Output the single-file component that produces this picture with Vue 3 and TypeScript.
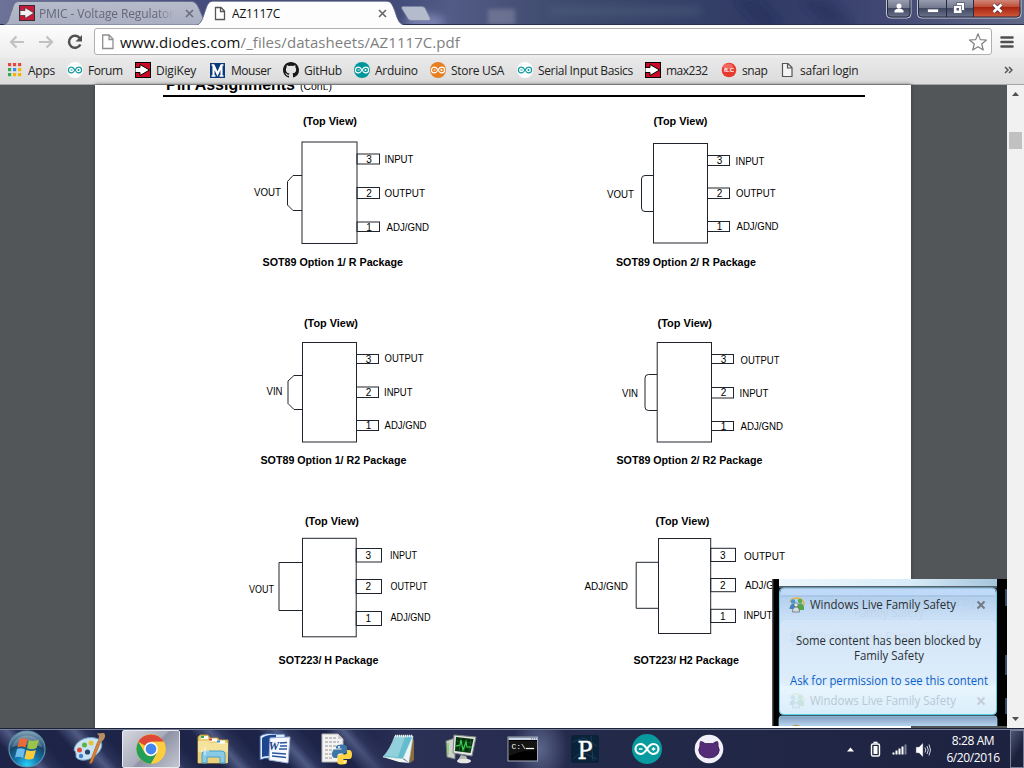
<script setup lang="ts">
interface Label { t: string; x: number; y: number; w: number }
interface Pin { y: number; h: number; ny: number; label: Label }
interface Package {
  box: string
  title: Label
  caption: Label
  body: { x: number; y: number; w: number; h: number }
  heel: string
  heelLabel: Label
  pinW: number
  pins: Pin[]
}
interface Bookmark { name: string; icon: string; w: number; ls: number }

const pin = (y: number, h: number, ny: number, t: string, x: number, ly: number, w: number): Pin => ({
  y, h, ny, label: { t, x, y: ly, w },
})

const packages: Package[] = [
  {
    box: '240 105 330 202',
    title: { t: '(Top View)', x: 303, y: 125, w: 54 },
    caption: { t: 'SOT89 Option 1/ R Package', x: 262.5, y: 266, w: 140.5 },
    body: { x: 302, y: 142, w: 55, h: 101.5 },
    heel: 'M302 175.5H293L287.5 181.5V205L293 210.5H302',
    heelLabel: { t: 'VOUT', x: 254, y: 196, w: 27 },
    pinW: 22.5,
    pins: [
      pin(154, 10, 162.5, 'INPUT', 384.5, 163, 29),
      pin(187.5, 11, 197, 'OUTPUT', 384.5, 197, 40.5),
      pin(222, 9.5, 231, 'ADJ/GND', 386.5, 231, 42.5),
    ],
  },
  {
    box: '570 105 241 202',
    title: { t: '(Top View)', x: 653.5, y: 125, w: 54 },
    caption: { t: 'SOT89 Option 2/ R Package', x: 616, y: 266, w: 140 },
    body: { x: 653.5, y: 143.5, w: 54, h: 99.5 },
    heel: 'M653.5 175.5H645Q641.5 175.5 641.5 179V208Q641.5 211.5 645 211.5H653.5',
    heelLabel: { t: 'VOUT', x: 607, y: 198, w: 27 },
    pinW: 22,
    pins: [
      pin(155.5, 10, 164, 'INPUT', 735.5, 165, 29),
      pin(188, 10.5, 197, 'OUTPUT', 736, 197, 39.5),
      pin(221.5, 10, 230, 'ADJ/GND', 736.5, 230, 42),
    ],
  },
  {
    box: '240 307 330 198',
    title: { t: '(Top View)', x: 304, y: 327, w: 54 },
    caption: { t: 'SOT89 Option 1/ R2 Package', x: 260.5, y: 464, w: 146 },
    body: { x: 302.5, y: 342.5, w: 54, h: 99.5 },
    heel: 'M302.5 375.5H294L288 381V403.5L294 409.5H302.5',
    heelLabel: { t: 'VIN', x: 266.5, y: 395, w: 16 },
    pinW: 22,
    pins: [
      pin(354.5, 9, 362.5, 'OUTPUT', 384.5, 362, 39),
      pin(387, 10.5, 396, 'INPUT', 384, 396, 28.5),
      pin(420.5, 10, 429, 'ADJ/GND', 384.5, 429, 42),
    ],
  },
  {
    box: '570 307 241 198',
    title: { t: '(Top View)', x: 657.5, y: 327, w: 54.5 },
    caption: { t: 'SOT89 Option 2/ R2 Package', x: 616.5, y: 464, w: 146 },
    body: { x: 657.2, y: 342.5, w: 54.3, h: 99.5 },
    heel: 'M657 374.5H648.5Q645 374.5 645 378V407Q645 410.5 648.5 410.5H657',
    heelLabel: { t: 'VIN', x: 622, y: 397, w: 16 },
    pinW: 22,
    pins: [
      pin(354.5, 9, 363, 'OUTPUT', 740.5, 364, 39),
      pin(387.5, 10.5, 396, 'INPUT', 739.5, 397, 29),
      pin(421.5, 9, 429.5, 'ADJ/GND', 740.5, 430, 42.5),
    ],
  },
  {
    box: '240 505 330 200',
    title: { t: '(Top View)', x: 305, y: 525, w: 54 },
    caption: { t: 'SOT223/ H Package', x: 278.5, y: 664, w: 100 },
    body: { x: 302.5, y: 538.3, w: 53.7, h: 98.5 },
    heel: 'M302.5 562.5H279V610.5H302.5',
    heelLabel: { t: 'VOUT', x: 249, y: 593, w: 25 },
    pinW: 25.3,
    pins: [
      pin(548.5, 13.5, 559, 'INPUT', 390, 559, 27),
      pin(579.5, 14, 590, 'OUTPUT', 390.5, 590, 37),
      pin(611.5, 14, 622, 'ADJ/GND', 390.5, 621, 40),
    ],
  },
  {
    box: '570 505 241 200',
    title: { t: '(Top View)', x: 655.5, y: 525, w: 54 },
    caption: { t: 'SOT223/ H2 Package', x: 633.5, y: 664, w: 105.5 },
    body: { x: 658.5, y: 538.5, w: 52.2, h: 95 },
    heel: 'M658.5 562.3H636.2V608.3H658.5',
    heelLabel: { t: 'ADJ/GND', x: 584.5, y: 590, w: 43.5 },
    pinW: 24.8,
    pins: [
      pin(548.3, 13.2, 559, 'OUTPUT', 744, 560, 41),
      pin(578.5, 13.2, 589, 'ADJ/GND', 745, 589, 43),
      pin(609.3, 13.2, 620, 'INPUT', 743.5, 619, 29),
    ],
  },
]

const bookmarks: Bookmark[] = [
  { name: 'Apps', icon: 'apps', w: 60, ls: -0.25 },
  { name: 'Forum', icon: 'ardWhite', w: 68, ls: -0.4 },
  { name: 'DigiKey', icon: 'digikey', w: 75, ls: -0.2 },
  { name: 'Mouser', icon: 'mouser', w: 73, ls: -0.45 },
  { name: 'GitHub', icon: 'github', w: 71, ls: -0.3 },
  { name: 'Arduino', icon: 'ardTeal', w: 76, ls: -0.3 },
  { name: 'Store USA', icon: 'ardOrange', w: 87, ls: -0.3 },
  { name: 'Serial Input Basics', icon: 'ardWhite', w: 128, ls: -0.35 },
  { name: 'max232', icon: 'digikey', w: 76, ls: -0.5 },
  { name: 'snap', icon: 'flc', w: 58, ls: -0.4 },
  { name: 'safari login', icon: 'page', w: 90, ls: -0.25 },
]
const ardFill: Record<string, string> = { ardWhite: '#fff', ardTeal: '#00979c', ardOrange: '#e67e22' }
const ardLine = (i: string): string => (i === 'ardWhite' ? '#11999e' : '#fff')
const appColors = ['#e8453c', '#e8453c', '#e8453c', '#34a853', '#4285f4', '#f4b400', '#34a853', '#f4b400', '#f4b400']
const tasks = ['paint', 'chrome', 'explorer', 'word', 'python', 'notepad', 'monitor', 'cmd', 'processing', 'arduino', 'github']
</script>

<template>
  <div class="screen">
    <header class="titlebar">
      <svg class="frame" width="1024" height="25" viewBox="0 0 1024 25">
        <defs>
          <linearGradient id="glass" x1="0" x2="1" y1="0" y2="0">
            <stop offset="0" stop-color="#6d7298" /><stop offset=".2" stop-color="#454c7c" />
            <stop offset=".38" stop-color="#424a78" /><stop offset=".44" stop-color="#525b85" />
            <stop offset=".55" stop-color="#3f4a6e" /><stop offset=".75" stop-color="#303a64" />
            <stop offset=".86" stop-color="#3f4772" /><stop offset="1" stop-color="#606888" />
          </linearGradient>
          <linearGradient id="tabOff" x1="0" x2="0" y1="0" y2="1">
            <stop offset="0" stop-color="#b7bccb" /><stop offset="1" stop-color="#a9afc1" />
          </linearGradient>
          <filter id="soft" x="-50%" y="-100%" width="200%" height="300%"><feGaussianBlur stdDeviation="4" /></filter>
          <filter id="softer" x="-50%" y="-50%" width="200%" height="200%"><feGaussianBlur stdDeviation="2" /></filter>
        </defs>
        <rect width="1024" height="25" fill="url(#glass)" />
        <rect x="488" y="9" width="27" height="16" fill="#8c90a8" opacity=".5" filter="url(#softer)" />
        <g filter="url(#soft)">
          <ellipse cx="425" cy="22" rx="20" ry="8" fill="#8c95c4" opacity=".7" />
          <rect x="550" y="8" width="150" height="6" fill="#566b86" opacity=".5" />
          <path d="M735 0h22l24 25h-22zM800 0h30l24 25h-30z" fill="#1e2955" opacity=".5" />
        </g>
        <path d="M0 24.5H1024" stroke="#2b3050" />
        <path d="M4 25C9 23 9 17 12 10C14 3 15 1.5 20 1.5H190C196 1.5 197 4 200 11L206 25Z" fill="url(#tabOff)" stroke="#6b7190" />
        <path d="M196 25.5C202 24 203 17 205.500 10C208 3 209 1.200 214 1.200H386C391 1.200 392 4 394.500 10C397 17 398 24 405 25.500Z" fill="#fdfdfd" stroke="#59607f" stroke-width=".8" />
        <path d="M404 6.500H421C424 6.500 425 7.500 426 10L430 18C430.500 20 430 20.500 428 20.500H412C409 20.500 408 19 407 17L402 9C401 7 402 6.500 404 6.500Z" fill="#b4bbcd" stroke="#7d84a4" stroke-width=".8" />
      </svg>
      <div class="tab off">
        <svg width="16" height="16" viewBox="0 0 16 16"><rect x=".5" y=".5" width="15" height="15" fill="#c61c38" stroke="#3c2a35" /><path d="M1 5.500H6V2.500L15 8L6 13.500V10.500H1Z" fill="#f4f0f2" stroke="#3c2a35" stroke-width=".7" /></svg>
        <span class="tabname">PMIC - Voltage Regulators</span>
        <svg class="x" width="9" height="9" viewBox="0 0 9 9"><path d="M1 1L8 8M8 1L1 8" stroke="#696d7b" stroke-width="1.600" /></svg>
      </div>
      <div class="tab on">
        <svg width="12" height="15" viewBox="0 0 12 15"><path d="M1.500 1.500H7L10.500 5V13.500H1.500ZM6.500 1.500V5.500H10.500" fill="#fff" stroke="#555" stroke-width="1.300" /></svg>
        <span class="tabname">AZ1117C</span>
        <svg class="x" width="9" height="9" viewBox="0 0 9 9"><path d="M1 1L8 8M8 1L1 8" stroke="#666" stroke-width="1.600" /></svg>
      </div>
      <svg class="controls" width="138" height="20" viewBox="886 0 138 20">
        <defs>
          <linearGradient id="btn" x1="0" x2="0" y1="0" y2="1">
            <stop offset="0" stop-color="#9ca1b2" /><stop offset=".45" stop-color="#747a90" />
            <stop offset=".48" stop-color="#3f4660" /><stop offset="1" stop-color="#6f7690" />
          </linearGradient>
          <linearGradient id="close" x1="0" x2="0" y1="0" y2="1">
            <stop offset="0" stop-color="#d28f82" /><stop offset=".42" stop-color="#c0503a" />
            <stop offset=".46" stop-color="#a82410" /><stop offset="1" stop-color="#d05a3a" />
          </linearGradient>
        </defs>
        <path d="M886.500 -1V14Q886.500 18 890.500 18H907Q911 18 911 14V-1Z" fill="url(#btn)" stroke="#c2c6d3" />
        <path d="M887.500 -1V13.500Q887.500 17 891 17H906.500Q910 17 910 13.500V-1" fill="none" stroke="#24293f" />
        <circle cx="899" cy="6" r="2.500" fill="#fff" /><path d="M894.500 12.500V10.500Q896 8.500 899 8.500T903.500 10.500V12.500Z" fill="#fff" />
        <path d="M917.500 -1V14Q917.500 18 921.500 18H1017Q1021 18 1021 14V-1Z" fill="url(#btn)" stroke="#c2c6d3" />
        <path d="M973.500 -1V17H1016Q1020 17 1020 13.500V-1Z" fill="url(#close)" />
        <path d="M918.500 -1V13.500Q918.500 17 922 17H1016.500Q1020 17 1020 13.500V-1M946.500 0V17M973.500 0V17" fill="none" stroke="#282c42" />
        <rect x="927.500" y="9" width="11" height="3.500" fill="#fff" stroke="#50566c" stroke-width=".8" />
        <path d="M956.500 2.500H964.500V10.500H962V13.500H953.500V5.500H956.500Z" fill="#fff" stroke="#4b5066" stroke-width=".8" /><rect x="956.500" y="8" width="2.500" height="2.500" fill="#555b72" /><path d="M957 5.500H961.500V10.500" fill="none" stroke="#555b72" stroke-width=".8" />
        <path d="M993.500 4.500L1001.500 12M1001.500 4.500L993.500 12" stroke="#53303a" stroke-width="4.200" /><path d="M993.500 4.500L1001.500 12M1001.500 4.500L993.500 12" stroke="#fff" stroke-width="2.700" />
      </svg>
    </header>

    <div class="toolbar">
      <svg width="16" height="14" viewBox="0 0 16 14"><path d="M15 7H2M7.500 1.500L2 7L7.500 12.500" fill="none" stroke="#c1c1c1" stroke-width="2.200" /></svg>
      <svg width="16" height="14" viewBox="0 0 16 14"><path d="M1 7H14M8.500 1.500L14 7L8.500 12.500" fill="none" stroke="#c1c1c1" stroke-width="2.200" /></svg>
      <svg width="16" height="16" viewBox="0 0 16 16"><path d="M12.800 4.200A6 6 0 1 0 13.400 10.500" fill="none" stroke="#505050" stroke-width="2.500" /><path d="M15 1V7.500H8.500Z" fill="#505050" /></svg>
      <div class="omnibox">
        <svg width="12" height="16" viewBox="0 0 12 16"><path d="M.7 1H7L11 5V14.500H.7ZM7 1V5.500H11" fill="#fff" stroke="#8f8f8f" stroke-width="1.300" /></svg>
        <span class="url"><b>www.diodes.com</b><i>/_files/datasheets/AZ1117C.pdf</i></span>
        <svg width="20" height="20" viewBox="0 0 20 20"><path d="M10 1.800L12.300 7.600L18.500 8L13.700 12L15.300 18L10 14.700L4.700 18L6.300 12L1.500 8L7.700 7.600Z" fill="#fff" stroke="#808080" stroke-width="1.200" stroke-linejoin="round" /></svg>
      </div>
      <svg class="menu" width="14" height="14" viewBox="0 0 14 14"><path d="M1.500 2.500H12.500M1.500 7H12.500M1.500 11.500H12.500" stroke="#505050" stroke-width="2.600" stroke-linecap="round" /></svg>
    </div>

    <nav class="bookmarks">
      <div v-for="(b, i) in bookmarks" :key="i" class="mark" :style="{ width: b.w + 'px', letterSpacing: b.ls + 'px' }">
        <svg width="16" height="16" viewBox="0 0 16 16">
          <g v-if="b.icon === 'apps'"><rect v-for="(c, k) in appColors" :key="k" :x="1 + (k % 3) * 5" :y="1 + Math.floor(k / 3) * 5" width="3.200" height="3.200" :fill="c" /></g>
          <g v-else-if="ardFill[b.icon]">
            <circle cx="8" cy="8" r="8" :fill="ardFill[b.icon]" />
            <path d="M8 8C6.500 5.500 5.500 5 4.200 5.200A2.800 2.800 0 0 0 4.200 10.800C5.500 11 6.500 10.500 8 8C9.500 5.500 10.500 5 11.800 5.200A2.800 2.800 0 0 1 11.800 10.800C10.500 11 9.500 10.500 8 8ZM3.500 8H5.500M10.500 8H12.500M11.500 7V9" fill="none" :stroke="ardLine(b.icon)" stroke-width="1.200" />
          </g>
          <g v-else-if="b.icon === 'digikey'"><rect x=".5" y=".5" width="15" height="15" fill="#cc0a27" stroke="#000" /><path d="M0 5.500H5V2.500L14.500 8L5 13.500V10.500H0Z" fill="#fff" stroke="#000" /></g>
          <g v-else-if="b.icon === 'mouser'"><rect x="0" y="1" width="15" height="15" fill="#0a3a7a" /><path d="M3.500 14V3L7.500 12L11.500 3V14" fill="none" stroke="#fff" stroke-width="2.100" /><path d="M1.500 14H5.500M9.500 14H13.500M1.500 3H4M11 3H13.500" stroke="#fff" stroke-width="1.300" /></g>
          <path v-else-if="b.icon === 'github'" fill="#181616" d="M8 0C3.580 0 0 3.580 0 8c0 3.540 2.290 6.530 5.470 7.590.4.070.55-.17.55-.38v-1.490c-2.230.48-2.690-1.070-2.690-1.070-.36-.92-.89-1.170-.89-1.170-.73-.5.050-.49.050-.49.810.060 1.230.83 1.230.83.710 1.230 1.870.87 2.330.66.070-.52.280-.87.510-1.070-1.780-.2-3.640-.89-3.640-3.950 0-.87.310-1.590.820-2.150-.08-.2-.36-1.020.080-2.120 0 0 .67-.21 2.200.820a7.600 7.600 0 0 1 4 0c1.530-1.040 2.200-.82 2.200-.82.440 1.100.160 1.920.080 2.120.51.560.820 1.270.820 2.150 0 3.070-1.870 3.750-3.650 3.950.29.250.540.730.540 1.480v2.200c0 .21.150.46.550.380A8 8 0 0 0 16 8c0-4.420-3.580-8-8-8z" />
          <g v-else-if="b.icon === 'flc'"><circle cx="8" cy="8" r="7.300" fill="#e8392f" /><ellipse cx="7" cy="4.500" rx="5" ry="3" fill="#f58b80" opacity=".6" /><text x="8" y="10.300" class="flc">fLC</text></g>
          <path v-else d="M3.500 1.500H9L13 5.500V14.500H3.500ZM8.500 1.500V6H13" fill="#f4f4f4" stroke="#555" stroke-width="1.200" />
        </svg>
        <span>{{ b.name }}</span>
      </div>
      <svg class="more" width="9" height="8" viewBox="0 0 9 8"><path d="M1 1L4 4L1 7M5 1L8 4L5 7" fill="none" stroke="#555" stroke-width="1.500" /></svg>
    </nav>

    <main class="viewer">
      <article class="sheet">
        <svg class="heading" width="816" height="20" viewBox="95 85 816 20">
          <text x="166" y="89.800" class="h" textLength="129" lengthAdjust="spacingAndGlyphs">Pin Assignments</text>
          <text x="300" y="89.800" class="cont" textLength="32" lengthAdjust="spacingAndGlyphs">(Cont.)</text>
          <path d="M163 96H865" stroke="#000" stroke-width="2" />
        </svg>
        <section class="packages">
          <svg v-for="p in packages" :key="p.box" :viewBox="p.box" :width="p.box.split(' ')[2]" :height="p.box.split(' ')[3]">
            <g class="line">
              <path :d="p.heel" />
              <rect :x="p.body.x" :y="p.body.y" :width="p.body.w" :height="p.body.h" />
              <rect v-for="n in p.pins" :key="n.y" :x="p.body.x + p.body.w" :y="n.y" :width="p.pinW" :height="n.h" />
            </g>
            <text class="bold" :x="p.title.x" :y="p.title.y" :textLength="p.title.w" lengthAdjust="spacingAndGlyphs">{{ p.title.t }}</text>
            <text class="bold" :x="p.caption.x" :y="p.caption.y" :textLength="p.caption.w" lengthAdjust="spacingAndGlyphs">{{ p.caption.t }}</text>
            <text :x="p.heelLabel.x" :y="p.heelLabel.y" :textLength="p.heelLabel.w" lengthAdjust="spacingAndGlyphs">{{ p.heelLabel.t }}</text>
            <template v-for="(n, k) in p.pins" :key="k">
              <text class="num" :x="p.body.x + p.body.w + 12" :y="n.ny">{{ 3 - k }}</text>
              <text :x="n.label.x" :y="n.label.y" :textLength="n.label.w" lengthAdjust="spacingAndGlyphs">{{ n.label.t }}</text>
            </template>
          </svg>
        </section>
      </article>
      <aside class="scroll">
        <svg width="17" height="16" viewBox="0 0 17 16"><path d="M5 11L8.500 7L12 11Z" fill="#505050" /></svg>
        <div class="thumb"></div>
        <svg width="17" height="16" viewBox="0 0 17 16"><path d="M5 5L8.500 9L12 5Z" fill="#505050" /></svg>
      </aside>
    </main>

    <div class="popup">
      <svg class="popback" width="235" height="147" viewBox="772 579 235 147">
        <defs>
          <linearGradient id="pg" x1="0" x2="0" y1="0" y2="1">
            <stop offset="0" stop-color="#a9caec" /><stop offset=".12" stop-color="#bad4f0" /><stop offset=".24" stop-color="#cbe0f6" /><stop offset=".26" stop-color="#c6ddf5" />
            <stop offset=".7" stop-color="#dcedfb" /><stop offset=".78" stop-color="#e8f5fd" /><stop offset="1" stop-color="#d9eefb" />
          </linearGradient>
          <linearGradient id="pt" x1="0" x2="1" y1="0" y2="0"><stop offset="0" stop-color="#edf7fd" /><stop offset=".6" stop-color="#d8ecf8" /><stop offset="1" stop-color="#a5c5dc" /></linearGradient>
          <linearGradient id="pn" x1="0" x2="0" y1="0" y2="1"><stop offset="0" stop-color="#7f9cbd" /><stop offset="1" stop-color="#b9d2ef" /></linearGradient>
          <linearGradient id="edge" x1="0" x2="1" y1="0" y2="0"><stop offset="0" stop-color="#777" /><stop offset=".25" stop-color="#000" /></linearGradient>
        </defs>
        <rect x="772" y="579" width="8" height="147" fill="url(#edge)" />
        <rect x="779" y="579" width="228" height="147" fill="#111a20" />
        <rect x="997" y="579" width="10" height="147" fill="#000" />
        <rect x="779" y="579" width="218" height="8" fill="url(#pt)" />
        <path d="M779 587H997" stroke="#555f68" stroke-width="2" />
        <rect x="779.500" y="588" width="217" height="126.500" rx="4" fill="url(#pg)" stroke="#59cfe5" />
        <path d="M780 592Q780 588 784 588H992Q996 588 996 592" fill="none" stroke="#7d93ac" />
        <path d="M781 595.500H995V591Q995 588.500 992 588.500H784Q781 588.500 781 591Z" fill="#bfdaf8" />
        <path d="M781 596H995" stroke="#9fbbdc" />
        <rect x="780" y="620" width="216" height="66" rx="5" fill="#dcebfa" opacity=".55" />
        <path d="M779 726V719Q779 716 782 716H994Q997 716 997 719V726Z" fill="url(#pn)" stroke="#8fe0ee" stroke-width=".7" />
        <path d="M792 726Q796 723.500 800 726" fill="#b09a50" />
        <path d="M1006 589V606M1006 655V675M1006 698V714" stroke="#324865" stroke-width="2" />
        <g id="people" transform="translate(789 597)">
          <path d="M1 5Q3 1 8 1Q14 1 15.500 8" fill="none" stroke="#e9b340" stroke-width="1.500" />
          <circle cx="4" cy="4.500" r="2.300" fill="#4a96d0" /><circle cx="11" cy="4" r="2.300" fill="#58ad57" />
          <path d="M.5 12Q1 7 4 7T8 12ZM8 12Q8 6.500 11.500 6.500T15 12Z" fill="#3e83bb" /><path d="M8 13Q8 6.500 11.500 6.500T15 13Z" fill="#55a745" />
          <circle cx="7" cy="8" r="2.100" fill="#e9edf0" stroke="#566" stroke-width=".7" /><path d="M3.500 15Q3.500 10 7 10T10.500 15Z" fill="#d8dde1" stroke="#566" stroke-width=".7" />
        </g>
        <use href="#people" y="33" opacity=".06" /><use href="#people" y="96" opacity=".16" />
        <path d="M977.500 601.500L984.500 608.500M984.500 601.500L977.500 608.500" stroke="#737a84" stroke-width="2" />
        <path d="M977.500 697.500L984.500 704.500M984.500 697.500L977.500 704.500" stroke="#c3cdd6" stroke-width="1.800" />
        <g class="seg">
          <text x="820" y="606" textLength="156" class="ghost faint">content has been blocked by</text>
          <text x="854" y="617" textLength="70" class="ghost faint">Family Safety</text>
          <text x="810" y="641" textLength="146" lengthAdjust="spacingAndGlyphs" class="ghost fainter">Windows Live Family Safety</text>
          <text x="810" y="609" textLength="146" lengthAdjust="spacingAndGlyphs">Windows Live Family Safety</text>
          <text x="796" y="645" textLength="185" lengthAdjust="spacingAndGlyphs">Some content has been blocked by</text>
          <text x="854" y="660" textLength="70" lengthAdjust="spacingAndGlyphs">Family Safety</text>
          <text x="790" y="685" textLength="198" lengthAdjust="spacingAndGlyphs" class="link">Ask for permission to see this content</text>
          <text x="810" y="705" textLength="146" lengthAdjust="spacingAndGlyphs" class="ghost">Windows Live Family Safety</text>
        </g>
      </svg>
    </div>

    <footer class="taskbar">
      <div class="start">
        <svg width="38" height="38" viewBox="0 0 38 38">
          <defs><radialGradient id="orb" cx=".5" cy=".95" r=".95"><stop offset="0" stop-color="#25d3fb" /><stop offset=".35" stop-color="#1577ae" /><stop offset=".65" stop-color="#174569" /><stop offset="1" stop-color="#8ba9bd" /></radialGradient></defs>
          <circle cx="19" cy="19" r="18" fill="url(#orb)" stroke="#5c92ad" stroke-width="1.200" />
          <path d="M4 17A15.500 15.500 0 0 1 34 17Q19 13 4 17Z" fill="#fff" opacity=".22" />
          <path d="M11.500 9.500Q15 7 19.500 9.500L17.500 17.500Q13.500 15.500 9.500 17.500Z" fill="#ec6a34" /><path d="M21 10Q26 12 31 9.500L28.500 18Q23.500 20.500 19 18Z" fill="#9bc44b" />
          <path d="M9 19Q13 17.500 17 19.500L15 28Q11 26 7 27.500Z" fill="#6cbcec" /><path d="M18.500 20Q23.500 22 28 20L25.500 28.500Q20.500 30.500 16.500 28.500Z" fill="#fdca3c" />
        </svg>
      </div>
      <div v-for="t in tasks" :key="t" class="task" :class="{ active: t === 'chrome' }">
        <svg width="32" height="32" viewBox="0 0 32 32">
          <g v-if="t === 'paint'">
            <path d="M1 17C2 8 13 3 22 5C31 7 30 15 25 20C20 26 11 29 5 26C1 24 5 21 1 17Z" fill="#c9e3f3" stroke="#6fa0c2" />
            <circle cx="6.500" cy="17" r="2.500" fill="#dd4b39" /><circle cx="11.500" cy="12" r="2.500" fill="#61b146" /><circle cx="18" cy="10" r="2.500" fill="#e8c331" /><circle cx="14.500" cy="19" r="2.600" fill="#29456b" /><circle cx="8" cy="23" r="2.200" fill="#3e7fc8" />
            <path d="M16.500 30L25 8L27.500 9L19.500 29Q17.500 31.500 16.500 30Z" fill="#e18330" stroke="#9c5417" stroke-width=".6" /><path d="M25 8L26 3L24 .5L31 0Q34 4 28.500 9Z" fill="#b98d60" />
          </g>
          <g v-else-if="t === 'chrome'">
            <circle cx="16" cy="16" r="14.700" fill="#fcc934" />
            <path d="M16 16L3.300 8.700A14.700 14.700 0 0 1 28.700 8.700H16Z" fill="#df4937" />
            <path d="M3.300 8.700L9.700 19.700A7.300 7.300 0 0 0 16 23.300L22.300 19.700L16 30.700A14.700 14.700 0 0 1 3.300 8.700Z" fill="#229f58" />
            <path d="M28.700 8.700H16V16L22.300 19.700L16 30.700A14.700 14.700 0 0 0 28.700 8.700Z" fill="#fccd3f" />
            <circle cx="16" cy="16" r="6.900" fill="#fff" /><circle cx="16" cy="16" r="5.400" fill="#4386ed" />
          </g>
          <g v-else-if="t === 'explorer'">
            <path d="M1 4L3 2H11L13 5H21L22 7H31L30 30H1Z" fill="#e7cf75" stroke="#b99736" />
            <rect x="4" y="3" width="7" height="3" fill="#fff" /><rect x="4" y="3" width="3" height="2" fill="#2eaa48" /><rect x="12" y="5.500" width="8" height="3" fill="#fff" /><rect x="12" y="5.500" width="3" height="2" fill="#d33f2d" /><rect x="20" y="8" width="8" height="3" fill="#fff" /><rect x="20" y="8" width="3" height="2" fill="#308cd2" />
            <path d="M1 8H11L13 10H31V30H1Z" fill="#f5e39b" /><path d="M1 19H31V30H1Z" fill="#ecd17c" />
            <path d="M20 7.500H28V10.500H20Z" fill="#fff" /><path d="M20 7.500H23V9.500H20Z" fill="#308cd2" />
            <path d="M5 30V21Q5 18 8 18H25Q28 18 28 21V30H23V24H10V30Z" fill="#89cbe6" stroke="#4aa1c8" /><path d="M8 14V22M4 18H12" stroke="#fff" opacity=".8" />
          </g>
          <g v-else-if="t === 'word'">
            <path d="M1 27V3Q7-1 18 1H26V24L12 25Q5 25 1 27Z" fill="#dfe9f8" stroke="#2e58a0" /><path d="M3 24V5Q9 1 17 2V24Q9 22 3 24Z" fill="#1e4690" />
            <path d="M11 5L31 4L29 30L10 27Z" fill="#f7faff" stroke="#9fb4d8" /><path d="M21 10L28 9.500M21 13L28 13M20 16L28 16M13 20L27 21M13 23L27 24.500" stroke="#2b569e" stroke-width="1.600" />
            <text x="9.500" y="17" class="w">W</text>
          </g>
          <g v-else-if="t === 'python'">
            <path d="M1 1H17L22 6V29H1Z" fill="#f3f3f3" stroke="#b4b4b4" /><path d="M17 1V6H22Z" fill="#ccc" /><path d="M4 5H15M4 9H18M4 13H18M4 17H14M4 21H12M4 25H12" stroke="#b4b4b4" stroke-width="1.400" stroke-dasharray="3 1" />
            <path d="M15 21.500V14Q15 11.500 20.500 11.500T26 14V18Q26 20.500 23.500 20.500H19Q16.500 20.500 16.500 23V25H14Q11 25 11 21T14 16.500H20.500V15.500H15" fill="#3c76a8" /><path d="M26 17H28Q31 17 31 21.500T28 26H21V27H26V29Q26 31.500 21 31.500T16.500 29V24Q16.500 21.500 19 21.500H23.500Q26 21.500 26 19Z" fill="#ffd544" />
            <circle cx="18" cy="14" r="1" fill="#fff" /><circle cx="23.500" cy="29" r="1" fill="#fff" />
          </g>
          <g v-else-if="t === 'notepad'">
            <path d="M27 5L31 7V27L27 30Z" fill="#8e6b3b" /><path d="M12 3L30 4L26 30L19 24Z" fill="#eef6f5" stroke="#9fb5b8" stroke-width=".6" />
            <path d="M12 3H30L20 26L0 24Q7 17 12 3Z" fill="#65bccd" stroke="#d8f4f5" stroke-width=".7" /><path d="M12 4H22L15 24L2 23Q8 16 12 4Z" fill="#a9dce2" opacity=".65" /><path d="M0 24L20 26L26 30L16 29Z" fill="#f1f6f4" />
            <path d="M12 3H29" stroke="#eee" stroke-width="2.500" stroke-dasharray="1.200 .8" />
          </g>
          <g v-else-if="t === 'monitor'">
            <path d="M1 8L10 5V26L2 24Z" fill="#cdd2cb" stroke="#727974" /><path d="M3 10V22" stroke="#70cc60" stroke-width="1.200" />
            <path d="M9 2L31 4L27 23L8 20Z" fill="#e5e7e2" stroke="#7f8580" /><path d="M11 4L28.500 6L25.500 20L10 18Z" fill="#063210" /><path d="M12 8L27 10M11 13L26 15M16 5L14 18M21 6L19 19M26 6L24 19" stroke="#246e2f" stroke-width=".6" /><path d="M11 13L15 12L16 7L18 17L21 9L22 14L27 14" fill="none" stroke="#35d14a" stroke-width="1.200" />
            <path d="M16 22L21 23L23 27H13Z" fill="#b3b9b4" /><ellipse cx="19" cy="28" rx="7" ry="2.300" fill="#e5e7e3" />
          </g>
          <g v-else-if="t === 'cmd'"><rect x="1" y="4" width="29.500" height="24" fill="#000" stroke="#a2aab6" /><rect x="1.500" y="4.500" width="28.500" height="2.500" fill="#cad7e9" /><path d="M24 5.800H29" stroke="#527cab" stroke-dasharray="1 1" /><path d="M2 8H30V17Q14 17 2 23Z" fill="#fff" opacity=".08" /><text x="4.500" y="15.500" class="cmd">C:\</text><path d="M19 15.500H27" stroke="#fff" stroke-width="1.200" /></g>
          <g v-else-if="t === 'processing'"><rect x="2" y="2" width="28" height="28" rx="2" fill="#0b2339" /><path d="M3 9L15 5L28 13M4 26L12 19L28 26M22 3L24 28" stroke="#1e4967" stroke-width=".7" fill="none" /><text x="16" y="25.500" class="p" textLength="15" lengthAdjust="spacingAndGlyphs">P</text></g>
          <g v-else-if="t === 'arduino'"><circle cx="16" cy="16" r="15" fill="#079ba0" /><path d="M16 16C13.500 12 11.500 11 9.500 11A5 5 0 0 0 9.500 21C11.500 21 13.500 20 16 16C18.500 12 20.500 11 22.500 11A5 5 0 0 1 22.500 21C20.500 21 18.500 20 16 16Z" fill="none" stroke="#fff" stroke-width="2.100" /><path d="M7.800 16H11.500M20.700 16H24.400M22.500 14.200V17.800" stroke="#fff" stroke-width="1.400" /></g>
          <g v-else><circle cx="16" cy="16" r="14.300" fill="#f0effa" /><path d="M7.500 8.500Q10 8.500 12 10.500H20Q22 8.500 24.500 8.500Q25.500 11 25 13Q27.500 17 25 21Q22 25 16 25T7 21Q4.500 17 7 13Q6.500 11 7.500 8.500Z" fill="#542b77" stroke="#3d2056" stroke-width=".8" /></g>
        </svg>
      </div>
      <div class="tray">
        <svg width="90" height="20" viewBox="844 738 90 20">
          <path d="M847 750.500L850.500 746.500L854 750.500Z" fill="#fff" />
          <rect x="871.500" y="743" width="8" height="12" rx="1.500" fill="none" stroke="#fff" stroke-width="1.400" /><rect x="873.500" y="745" width="4" height="8" fill="#fff" /><path d="M873.500 741.500H877.500" stroke="#fff" stroke-width="1.600" />
          <path d="M893.500 753.500V751.500M896.500 753.500V749.500M899.500 753.500V747.500M902.500 753.500V745.500" stroke="#fff" stroke-width="2" /><path d="M905.500 753.500V743.500" stroke="#7f8499" stroke-width="2" />
          <path d="M916 746H919L923 742V756L919 752H916Z" fill="#fff" stroke="#5a6070" stroke-width=".5" /><path d="M925 746.500Q926.500 749 925 751.500M927 745Q929.500 749 927 753M929 743.500Q932 749 929 754.500" fill="none" stroke="#e5e8ef" stroke-width=".9" />
        </svg>
      </div>
      <div class="clock"><span>8:28 AM</span><span>6/20/2016</span></div>
      <div class="desk"></div>
    </footer>
  </div>
</template>

<style>
html, body { margin: 0; overflow: hidden; }
</style>

<style scoped>
.screen { position: relative; width: 1024px; height: 768px; overflow: hidden; display: flex; flex-direction: column; font-family: "Open Sans", "Noto Sans", sans-serif; font-size: 12px; color: #222; }
svg { flex: none; display: block; }
.titlebar { position: relative; height: 25px; display: flex; flex: none; }
.frame { position: absolute; left: 0; top: 0; }
.tab { position: relative; display: flex; align-items: center; box-sizing: border-box; height: 26px; letter-spacing: -.2px; white-space: nowrap; }
.off { width: 203px; padding: 0 9px 0 19px; gap: 4px; color: #646879; }
.on { width: 190px; padding: 0 6px 0 11px; gap: 6px; color: #111; }
.tabname { flex: 1; overflow: hidden; }
.off .tabname { margin-right: 8px; letter-spacing: -.12px; mask-image: linear-gradient(90deg, #000 88%, transparent 101%); }
.controls { margin-left: auto; position: relative; }
.toolbar { height: 33px; flex: none; display: flex; align-items: center; background: linear-gradient(#fdfdfd, #ececec); padding: 0 10px 0 9px; box-sizing: border-box; gap: 13px; }
.omnibox { flex: 1; display: flex; align-items: center; height: 27px; box-sizing: border-box; background: #fff; border: 1px solid #b0b0b0; border-radius: 3px; padding: 0 3px 0 7px; margin-left: -2px; }
.url { flex: 1; margin-left: 6px; font-size: 15px; white-space: nowrap; letter-spacing: .07px; }
.url b, .url i { font-weight: 400; font-style: normal; }
.url b { color: #111; }
.url i { color: #808080; }
.menu { margin-left: -5px; }
.bookmarks { height: 27px; flex: none; box-sizing: border-box; display: flex; align-items: center; padding: 0 11px 2px 7px; background: linear-gradient(#e9e9e9, #dcdcdc); border-bottom: 1px solid #a5a5a5; }
.mark { display: flex; align-items: center; gap: 5px; white-space: nowrap; }
.more { margin-left: auto; }
.flc { font: bold 6px "Liberation Sans", sans-serif; fill: #fff; text-anchor: middle; letter-spacing: 0; }
.viewer { flex: 1; min-height: 0; display: flex; background: #525659; padding-left: 95px; }
.sheet { width: 816px; background: #fff; box-shadow: 0 0 4px #3a3d40; overflow: hidden; }
.packages { display: grid; grid-template-columns: 330px 241px; grid-template-rows: 202px 198px 200px; padding-left: 145px; }
.packages text { font: 10px "Liberation Sans", Arial, sans-serif; fill: #000; }
.packages .bold { font-weight: 700; font-size: 10.700px; }
.packages .num { text-anchor: middle; }
.line { fill: none; stroke: #20252d; stroke-width: 1; }
.h { font: bold 16px "Liberation Sans", Arial, sans-serif; }
.cont { font: 11px "Liberation Sans", Arial, sans-serif; }
.scroll { margin-left: auto; width: 17px; background: #f1f1f1; display: flex; flex-direction: column; }
.thumb { width: 13px; height: 17px; margin: 31px 2px auto; background: #c1c1c1; }
.popup { position: absolute; left: 772px; top: 579px; }
.seg text { font: 12px "Open Sans", "Noto Sans", sans-serif; fill: #2a2f35; }
.seg .ghost { fill: #b9c8d4; }
.seg .faint { opacity: .4; }
.seg .fainter { opacity: .25; }
.seg .link { fill: #0a5fc8; }
.taskbar { height: 40px; flex: none; box-sizing: border-box; display: flex; align-items: center; border-top: 1px solid #1b2136; box-shadow: inset 0 1px #77809b; background:
  radial-gradient(ellipse 28px 40px at 540px 20px, #5b658b, transparent),
  linear-gradient(90deg, transparent 34%, #2b3056 40%, #232949 60%, #1d2240 100%),
  repeating-linear-gradient(48deg, #1d2448 0 16px, #4f5a83 30px, #2b335a 38px, #1d2448 50px); }
.start { width: 58px; padding-left: 8px; box-sizing: border-box; }
.task { width: 62px; height: 39px; display: flex; align-items: center; justify-content: center; box-sizing: border-box; }
.active { width: 58px; margin: 0 2px; height: 38px; border: 1px solid #e7e9ef; border-radius: 2px; background: linear-gradient(135deg, #d5d7df, #a9adbb 48%, #8d92a5 52%, #c4c7d1); }
.w { font: italic bold 12px "Liberation Serif", serif; fill: #1f4690; }
.cmd { font: 8px "Liberation Mono", monospace; fill: #fff; }
.p { font: 25px "DejaVu Serif", serif; fill: #fff; stroke: #fff; stroke-width: .5px; text-anchor: middle; }
.tray { margin-left: auto; }
.clock { width: 74px; padding-left: 2px; display: flex; flex-direction: column; align-items: center; color: #fff; line-height: 17px; letter-spacing: -.4px; }
.desk { width: 14px; height: 38px; box-sizing: border-box; border: 1px solid #767d95; background: linear-gradient(120deg, #4d5673, #1a213b 60%); }
</style>
